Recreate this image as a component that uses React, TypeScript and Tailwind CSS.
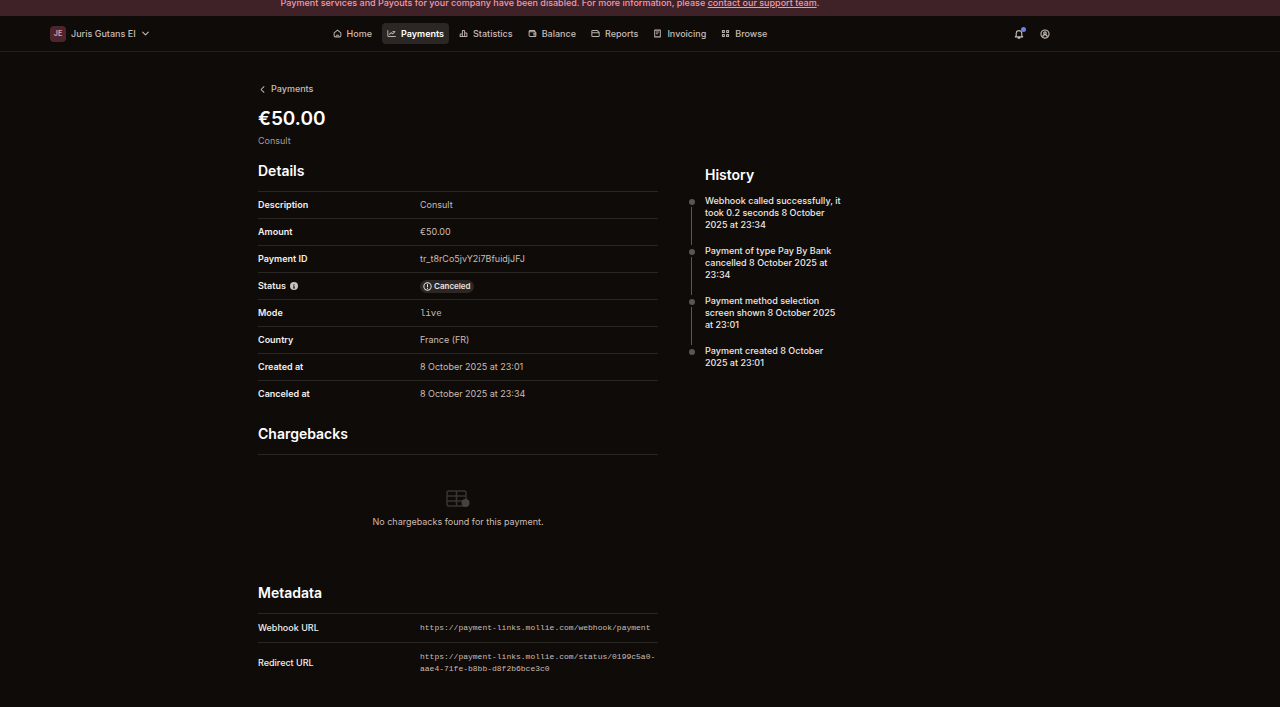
import type { ReactNode } from 'react'
import clsx from 'clsx'

interface IconProps {
  className?: string
  children: ReactNode
}

function Icon({ className, children }: IconProps) {
  return (
    <svg
      viewBox="0 0 16 16"
      fill="none"
      stroke="currentColor"
      strokeWidth="1.8"
      strokeLinecap="round"
      strokeLinejoin="round"
      aria-hidden="true"
      className={clsx('shrink-0', className)}
    >
      {children}
    </svg>
  )
}

const NAV: { label: string; active?: boolean; icon: ReactNode }[] = [
  {
    label: 'Home',
    icon: <path d="M2 7 8 2l6 5v5a2 2 0 0 1-2 2H4a2 2 0 0 1-2-2zM6 11h4" />,
  },
  {
    label: 'Payments',
    active: true,
    icon: <path d="M1.500 2.500V12a1.500 1.500 0 0 0 1.500 1.500h12M4.500 9.500l3-3 2.500 2L14 4.500M10.500 4.500H14" />,
  },
  {
    label: 'Statistics',
    icon: <path d="M6 13.500V3.500a1 1 0 0 1 1-1h2a1 1 0 0 1 1 1v10M6 9H3a1 1 0 0 0-1 1v3.500h12V8a1 1 0 0 0-1-1h-3" />,
  },
  {
    label: 'Balance',
    icon: (
      <path d="M12 5V3.500a1 1 0 0 0-1-1H3.500a1.250 1.250 0 0 0 0 2.500H12.500a1.500 1.500 0 0 1 1.500 1.500V12a1.500 1.500 0 0 1-1.500 1.500H4A2 2 0 0 1 2 11.500V4M14 7.500h-3.500v3H14" />
    ),
  },
  {
    label: 'Reports',
    icon: <path d="M1.500 6.500h13M1.500 5V12A1.500 1.500 0 0 0 3 13.500h10a1.500 1.500 0 0 0 1.500-1.500V6L11 2.500H3A1.500 1.500 0 0 0 1.500 4z" />,
  },
  {
    label: 'Invoicing',
    icon: <path d="M3 2h10v12H3zM6 5.500h4M6 8.500h2" />,
  },
  {
    label: 'Browse',
    icon: <path d="M2.500 2.500H6V6H2.500zM10 2.500h3.500V6H10zM2.500 10H6v3.500H2.500zM10 10h3.500v3.500H10z" />,
  },
]

const HISTORY = [
  'Webhook called successfully, it took 0.2 seconds 8 October 2025 at 23:34',
  'Payment of type Pay By Bank cancelled 8 October 2025 at 23:34',
  'Payment method selection screen shown 8 October 2025 at 23:01',
  'Payment created 8 October 2025 at 23:01',
]

function InfoIcon() {
  return (
    <svg viewBox="0 0 16 16" aria-hidden="true" className="size-2 shrink-0">
      <circle cx="8" cy="8" r="8" fill="#c9c3bf" />
      <path d="M8 4v1.500M6.500 7.500H8V12M6 12h4" stroke="#0f0b08" strokeWidth="1.800" fill="none" />
    </svg>
  )
}

function StatusBadge() {
  return (
    <span className="inline-flex h-[13px] items-center gap-0.5 rounded-full bg-[#2c2724] px-[3px] align-middle text-[8px] font-semibold text-[#e8e4e1]">
      <Icon className="size-[9px]">
        <circle cx="8" cy="8" r="6.500" />
        <path d="M8 4.500v4M8 11v.5" />
      </Icon>
      Canceled
    </span>
  )
}

const DETAILS: { label: string; info?: boolean; value: ReactNode }[] = [
  { label: 'Description', value: 'Consult' },
  { label: 'Amount', value: '€50.00' },
  { label: 'Payment ID', value: 'tr_t8rCo5jvY2i7BfuidjJFJ' },
  { label: 'Status', info: true, value: <StatusBadge /> },
  { label: 'Mode', value: <span className="font-['Liberation_Mono',monospace]">live</span> },
  { label: 'Country', value: 'France (FR)' },
  { label: 'Created at', value: '8 October 2025 at 23:01' },
  { label: 'Canceled at', value: '8 October 2025 at 23:34' },
]

const METADATA = [
  { label: 'Webhook URL', value: 'https://payment-links.mollie.com/webhook/payment' },
  { label: 'Redirect URL', value: 'https://payment-links.mollie.com/status/0199c5a0-aae4-71fe-b8bb-d8f2b6bce3c0' },
]

function SectionTitle({ children }: { children: ReactNode }) {
  return <h2 className="text-[14px] leading-5 font-semibold text-white">{children}</h2>
}

function Header() {
  return (
    <header className="border-b border-[#231f1c]">
      <div className="grid h-[35px] w-full max-w-[1100px] grid-cols-[1fr_auto_1fr] items-center px-[50px]">
        <button type="button" className="flex items-center gap-[5px] justify-self-start font-medium">
          <span className="grid size-4 place-items-center rounded-sm bg-[#4e252d] text-[7px] font-semibold text-[#f0a0ae]">
            JE
          </span>
          Juris Gutans EI
          <Icon className="size-[9px]">
            <path d="m3 5.500 5 5 5-5" />
          </Icon>
        </button>
        <nav aria-label="Main" className="flex gap-[5px]">
          {NAV.map((item) => (
            <a
              key={item.label}
              href="#"
              aria-current={item.active ? 'page' : undefined}
              className={clsx(
                'flex h-[21px] items-center gap-[5px] rounded px-[5px]',
                item.active ? 'bg-[#2c2724] font-semibold text-white' : 'font-medium',
              )}
            >
              <Icon className="size-[9px] text-[#b8b0ab]">{item.icon}</Icon>
              {item.label}
            </a>
          ))}
        </nav>
        <div className="flex items-center gap-4 justify-self-end">
          <button type="button" aria-label="Notifications" className="relative">
            <Icon className="size-[10px]">
              <path d="M3.500 11V7a4.500 4.500 0 0 1 9 0v4l1.500 1.500H2zM6.500 14.500h3" />
            </Icon>
            <span className="absolute -top-0.5 -right-0.5 size-[5px] rounded-full bg-[#6f7fe8]" />
          </button>
          <button type="button" aria-label="Account">
            <Icon className="size-[10px]">
              <circle cx="8" cy="8" r="6.500" />
              <circle cx="8" cy="6.500" r="2" />
              <path d="M4.500 12.500a3.500 3.500 0 0 1 7 0" />
            </Icon>
          </button>
        </div>
      </div>
    </header>
  )
}

export default function App() {
  return (
    <div className="min-h-screen bg-[#0f0b08] font-['Inter',sans-serif] text-[9px] leading-3 text-[#c9bdb6]">
      <div className="h-4 overflow-hidden bg-[#3f2228]">
        <p className="w-full max-w-[1100px] text-center leading-[5px] font-medium text-[#f09aae]">
          Payment services and Payouts for your company have been disabled. For more information, please{' '}
          <a href="#" className="underline">
            contact our support team
          </a>
          .
        </p>
      </div>
      <Header />
      <div className="w-full max-w-[1100px]">
        <main className="mx-auto grid max-w-[584px] grid-cols-[minmax(0,1fr)_154px] gap-x-[30px] pt-[31px] pb-6">
          <div className="col-span-2">
            <a href="#" className="flex items-center gap-1 font-medium">
              <Icon className="size-[9px]">
                <path d="m10.500 3-5 5 5 5" />
              </Icon>
              Payments
            </a>
            <h1 className="mt-3 text-[19px] leading-6 font-semibold text-white">€50.00</h1>
            <p className="mt-1 text-[#a59b95]">Consult</p>
          </div>

          <div className="pt-3.5">
            <SectionTitle>Details</SectionTitle>
            <table className="mt-2.5 w-full table-fixed border-collapse text-left">
              <tbody>
                {DETAILS.map((row) => (
                  <tr key={row.label} className="h-[27px] border-t border-[#2a2623]">
                    <th scope="row" className="w-[162px] p-0 font-semibold text-[#f3efec]">
                      <span className="flex items-center gap-1">
                        {row.label}
                        {row.info && <InfoIcon />}
                      </span>
                    </th>
                    <td className="p-0">{row.value}</td>
                  </tr>
                ))}
              </tbody>
            </table>

            <section className="mt-4">
              <SectionTitle>Chargebacks</SectionTitle>
              <div className="mt-2.5 flex h-[129px] flex-col items-center border-t border-[#2a2623] pt-[35px]">
                <svg viewBox="0 0 24 18" aria-hidden="true" className="h-[18px] w-6 text-[#3a3532]">
                  <g fill="none" stroke="currentColor" strokeWidth="1.500">
                    <rect x="1" y="1" width="19" height="15" rx="1.500" />
                    <path d="M1 6h19M1 11h19M10.500 1v15" />
                  </g>
                  <circle cx="19.500" cy="13" r="4" fill="#47423f" />
                </svg>
                <p className="mt-2">No chargebacks found for this payment.</p>
              </div>
            </section>

            <section>
              <SectionTitle>Metadata</SectionTitle>
              <table className="mt-2.5 w-full table-fixed border-collapse text-left">
                <tbody>
                  {METADATA.map((row) => (
                    <tr key={row.label} className="border-t border-[#2a2623]">
                      <th scope="row" className="w-[162px] px-0 py-2 font-medium text-[#f3efec]">
                        {row.label}
                      </th>
                      <td className="px-0 py-2 font-['Liberation_Mono',monospace] text-[8px] leading-3 break-words">
                        {row.value}
                      </td>
                    </tr>
                  ))}
                </tbody>
              </table>
            </section>
          </div>

          <aside className="pt-[18px]">
            <div className="pl-[17px]">
              <SectionTitle>History</SectionTitle>
            </div>
            <ol className="mt-2.5">
              {HISTORY.map((text, i) => (
                <li key={text} className="flex gap-2.5">
                  <div className="flex w-[7px] shrink-0 flex-col items-center pt-1">
                    <span className="size-1.5 shrink-0 rounded-full bg-[#5c5652]" />
                    {i < HISTORY.length - 1 && <span className="mt-0.5 w-px flex-1 bg-[#5c5652]" />}
                  </div>
                  <p className={clsx('font-medium text-[#ece8e5]', i < HISTORY.length - 1 && 'pb-3.5')}>
                    {text}
                  </p>
                </li>
              ))}
            </ol>
          </aside>
        </main>
      </div>
    </div>
  )
}
